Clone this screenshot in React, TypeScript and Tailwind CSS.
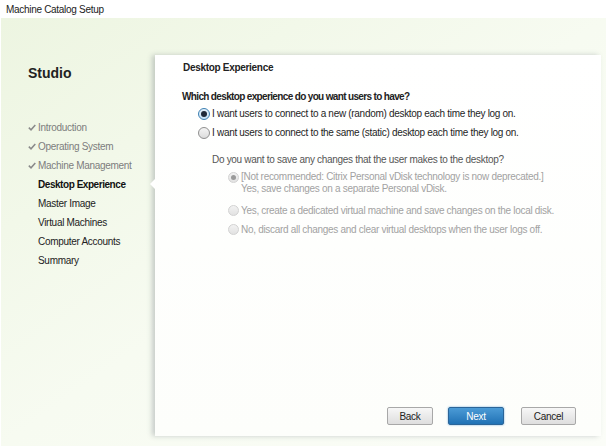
import React from 'react';

const steps = [
    { label: 'Introduction', done: true },
    { label: 'Operating System', done: true },
    { label: 'Machine Management', done: true },
    { label: 'Desktop Experience', current: true },
    { label: 'Master Image' },
    { label: 'Virtual Machines' },
    { label: 'Computer Accounts' },
    { label: 'Summary' },
];

const Radio: React.FC<{ checked?: boolean; disabled?: boolean }> = ({ checked, disabled }) => {
    if (disabled) {
        return (
            <span className="flex items-center justify-center w-[11px] h-[11px] rounded-full border border-[#d2d2d2] bg-gradient-to-b from-[#f2f2f2] to-[#e2e2e2] shrink-0">
                {checked && <span className="w-[5px] h-[5px] rounded-full bg-[#9a9a9a]" />}
            </span>
        );
    }
    return (
        <span
            className={
                checked
                    ? 'flex items-center justify-center w-[12px] h-[12px] rounded-full border border-[#3c7fb1] bg-gradient-to-b from-[#e4f1fb] to-[#c4e1f7] shrink-0'
                    : 'flex items-center justify-center w-[12px] h-[12px] rounded-full border border-[#8f8f8f] bg-gradient-to-b from-[#f4f4f4] to-[#dcdcdc] shrink-0'
            }
        >
            {checked && <span className="w-[6px] h-[6px] rounded-full bg-[#1f2a3a]" />}
        </span>
    );
};

const Check = () => (
    <svg width="8" height="7" viewBox="0 0 8 7" className="shrink-0">
        <path d="M0.8 3.6 L3 5.8 L7.3 0.9" fill="none" stroke="#8a8a8a" strokeWidth="1.5" />
    </svg>
);

const App: React.FC = () => {
    return (
        <div className="w-[606px] h-[446px] flex flex-col bg-white text-[10px] tracking-[-0.3px] text-[#1e1e1e] overflow-hidden" style={{ fontFamily: '"Liberation Sans", Arial, sans-serif' }}>
            <div className="h-[18px] px-[6px] flex items-center text-[10px] text-[#222]">Machine Catalog Setup</div>

            <div className="flex-1 flex ml-[1px] bg-gradient-to-br from-[#edf5e1] via-[#f7fbf1] to-[#fbfdf8]">
                {/* steps */}
                <div className="w-[154px] shrink-0 pl-[27px] pt-[46px]">
                    <div className="text-[14px] font-bold tracking-normal text-[#222] leading-[18px]">Studio</div>
                    <div className="mt-[36px] flex flex-col">
                        {steps.map(s => (
                            <div key={s.label} className="h-[19px] flex items-center gap-[2px]">
                                <span className="w-[8px] flex justify-center">{s.done && <Check />}</span>
                                <span
                                    className={
                                        s.done
                                            ? 'text-[#7d7d7d] whitespace-nowrap'
                                            : s.current
                                              ? 'font-bold tracking-[-0.45px] text-[#111] whitespace-nowrap'
                                              : 'text-[#222] whitespace-nowrap'
                                    }
                                >
                                    {s.label}
                                </span>
                            </div>
                        ))}
                    </div>
                </div>

                {/* page */}
                <div className="relative flex-1 mt-[37px] mb-[10px] mr-[5px] bg-gradient-to-b from-white to-[#fdfefb] shadow-[-3px_0_5px_rgba(80,90,100,0.28)] flex flex-col">
                    <div className="absolute left-[-5px] top-[124px] w-0 h-0 border-y-[5px] border-y-transparent border-r-[5px] border-r-white" />

                    <div className="pl-[27px] pt-[6px] flex-1">
                        <div className="font-bold text-[#222] leading-[14px] pl-[1px]">Desktop Experience</div>

                        <div className="mt-[15px] font-bold tracking-[-0.65px] text-[#222] leading-[14px]">Which desktop experience do you want users to have?</div>
                        <div className="pl-[16px] flex flex-col">
                            <label className="h-[19px] flex items-center gap-[2px]">
                                <Radio checked />
                                <span>I want users to connect to a new (random) desktop each time they log on.</span>
                            </label>
                            <label className="h-[19px] flex items-center gap-[2px]">
                                <Radio />
                                <span>I want users to connect to the same (static) desktop each time they log on.</span>
                            </label>
                        </div>

                        <div className="pl-[30px] mt-[11px] text-[#a2a2a2]">
                            <div className="text-[#555] leading-[14px]">Do you want to save any changes that the user makes to the desktop?</div>
                            <div className="mt-[4px] pl-[16px] flex flex-col">
                                <div className="flex items-start gap-[2px]">
                                    <span className="mt-[1px]"><Radio checked disabled /></span>
                                    <span className="leading-[12px]">
                                        [Not recommended: Citrix Personal vDisk technology is now deprecated.]
                                        <br />
                                        Yes, save changes on a separate Personal vDisk.
                                    </span>
                                </div>
                                <div className="mt-[6px] flex items-center gap-[2px] h-[19px]">
                                    <Radio disabled />
                                    <span>Yes, create a dedicated virtual machine and save changes on the local disk.</span>
                                </div>
                                <div className="flex items-center gap-[2px] h-[19px]">
                                    <Radio disabled />
                                    <span>No, discard all changes and clear virtual desktops when the user logs off.</span>
                                </div>
                            </div>
                        </div>
                    </div>

                    <div className="flex justify-end items-center pr-[25px] pb-[11px]">
                        <button className="w-[46px] h-[18px] rounded-[2px] border border-[#a8a8a8] bg-gradient-to-b from-[#f7f7f7] to-[#dedede] text-[10px] text-[#222]">Back</button>
                        <button className="ml-[15px] w-[56px] h-[18px] rounded-[2px] border border-[#2b6598] bg-gradient-to-b from-[#4b9bd6] to-[#1f72b5] text-[10px] text-white shadow-[0_0_2px_rgba(60,140,210,0.8)]">Next</button>
                        <button className="ml-[17px] w-[55px] h-[18px] rounded-[2px] border border-[#a8a8a8] bg-gradient-to-b from-[#f7f7f7] to-[#dedede] text-[10px] text-[#222]">Cancel</button>
                    </div>
                </div>
            </div>
        </div>
    );
};

export default App;
